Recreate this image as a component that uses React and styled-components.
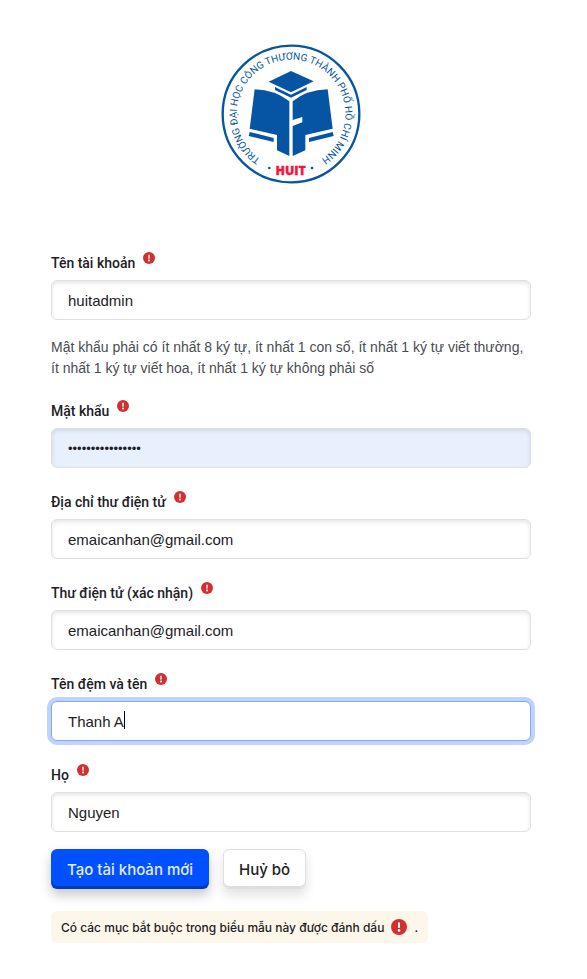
import React, { useEffect, useRef, useState } from "react";
import styled, { createGlobalStyle, css } from "styled-components";

const GlobalStyle = createGlobalStyle`
  * {
    box-sizing: border-box;
  }
  body {
    margin: 0;
    background: #fff;
    color: #1d2125;
    font-family: "Liberation Sans", Arial, sans-serif;
    font-size: 14px;
  }
`;

const Page = styled.main`
  padding: 44px 56px 36px 51px;
`;
const Logo = styled.svg`
  display: block;
  width: 140px;
  height: 140px;
  margin: 0 auto 68px;
`;
const Form = styled.form`
  display: flex;
  flex-direction: column;
`;
const Field = styled.div`
  display: flex;
  flex-direction: column;
  gap: 8px;
  margin-bottom: ${(props) => (props.$tight ? "17px" : "23px")};
`;
const Label = styled.label`
  display: flex;
  gap: 8px;
  height: 20px;
  line-height: 22px;
  font-family: Roboto, sans-serif;
  font-size: 14px;
  font-weight: 500;
`;
const InputBox = styled.div`
  position: relative;
`;
const Input = styled.input`
  display: block;
  width: 100%;
  height: 40px;
  padding: 0 16px;
  border: 1px solid #dee0e2;
  border-radius: 6px;
  outline: none;
  background: ${(props) => (props.$filled ? "#e8f0fe" : "#fff")};
  box-shadow: inset 0 2px 4px rgba(0, 0, 0, 0.1);
  color: #1d2125;
  caret-color: transparent;
  font-family: "Liberation Sans", Arial, sans-serif;
  font-size: ${(props) => (props.type === "password" ? "13px" : "15px")};
  &:focus {
    border-color: #80a8ff;
    box-shadow: 0 0 0 4px #bfd3ff;
  }
`;
// same font as the input, so that its width follows the typed text
const Caret = styled.span`
  position: absolute;
  top: 10px;
  left: 17px;
  border-right: 1px solid #000;
  height: 18px;
  font-size: 15px;
  line-height: 18px;
  white-space: pre;
  color: transparent;
  pointer-events: none;
`;
const Help = styled.p`
  margin: 0 0 21px;
  line-height: 21px;
  font-size: 14px;
  color: #494c50;
`;
const Actions = styled.div`
  display: flex;
  gap: 14px;
  margin-bottom: 22px;
`;
const Button = styled.button`
  height: 40px;
  padding: 0 15px;
  border: 1px solid #dee0e2;
  border-radius: 6px;
  background: #fff;
  box-shadow: inset 0 -2px 0 #dcdfe2, 0 6px 12px rgba(0, 0, 0, 0.12);
  color: #1d2125;
  font-family: Inter, sans-serif;
  font-size: 15px;
  font-weight: 500;
  cursor: pointer;
  ${(props) =>
    props.$primary &&
    css`
      border-color: transparent;
      background: #0050ff border-box;
      box-shadow: inset 0 -2px 0 #003ab9, 0 6px 12px rgba(0, 0, 0, 0.22);
      border-bottom-color: #003ab9;
      color: #e2ebff;
    `}
`;
const Notice = styled.div`
  display: flex;
  align-items: center;
  align-self: flex-start;
  gap: 7px;
  height: 32px;
  padding: 0 10px;
  border-radius: 6px;
  background: #fdf6ea;
  font-family: Inter, sans-serif;
  font-size: 12px;
  font-weight: 500;
`;
const Mark = styled.svg`
  flex: none;
  width: ${(props) => props.$size}px;
  height: ${(props) => props.$size}px;
`;

const fields = [
  { id: "email", label: "Địa chỉ thư điện tử", value: "emaicanhan@gmail.com" },
  {
    id: "email2",
    label: "Thư điện tử (xác nhận)",
    value: "emaicanhan@gmail.com",
  },
  { id: "firstname", label: "Tên đệm và tên", value: "Thanh A", focus: true },
  { id: "lastname", label: "Họ", value: "Nguyen", last: true },
];

function Required({ size = 12 }) {
  return (
    <Mark $size={size} viewBox="0 0 16 16" aria-hidden="true">
      <circle cx="8" cy="8" r="8" fill="#d12f32" />
      <path d="M6.9 3.6h2.2L8.8 9H7.2z" fill="#fff" />
      <circle cx="8" cy="11.4" r="1.3" fill="#fff" />
    </Mark>
  );
}

function HuitLogo() {
  return (
    <Logo viewBox="34 26 420 420" role="img" aria-label="HUIT">
      <defs>
        <path id="ring" d="M244 399A163 163 0 0 1 244 73A163 163 0 0 1 244 399" />
      </defs>
      <circle
        cx="244"
        cy="236"
        r="205"
        fill="#fff"
        stroke="#0655a4"
        strokeWidth="7"
      />
      <text
        fill="#0655a4"
        fontFamily="Roboto, sans-serif"
        fontSize="30"
        textAnchor="middle"
      >
        <textPath href="#ring" startOffset="50%">
          TRƯỜNG ĐẠI HỌC CÔNG THƯƠNG THÀNH PHỐ HỒ CHÍ MINH
        </textPath>
      </text>
      <g fill="#0655a4">
        <path d="M177 139L244 107L312 138L244 171Z" />
        <path d="M196 155L244 178L291 155V164L244 187L196 164Z" />
        <path d="M135 162Q196 164 239 198V362L202 345V299L120 280Z" />
        <path d="M354 162Q290 164 249 198V254L278 245V261L249 272V362L287 345V299L369 280Z" />
        <path d="M120 290L192 308V320L117 302Z" />
        <path d="M369 290L298 308V320L372 302Z" />
        <circle cx="179" cy="398" r="4" />
        <circle cx="307" cy="398" r="4" />
      </g>
      <text
        x="243"
        y="419"
        fill="#f0183f"
        stroke="#f0183f"
        strokeWidth="1"
        fontFamily="'Open Sans', sans-serif"
        fontSize="37"
        fontWeight="800"
        textAnchor="middle"
      >
        HUIT
      </text>
    </Logo>
  );
}

function FormField({ id, label, value, type = "text", filled, focus, last }) {
  const [text, setText] = useState(value);
  const [active, setActive] = useState(false);
  const ref = useRef(null);

  useEffect(() => {
    if (focus) {
      ref.current.focus();
    }
  }, [focus]);

  return (
    <Field $tight={last}>
      <Label htmlFor={id}>
        {label}
        <Required />
      </Label>
      <InputBox>
        <Input
          id={id}
          ref={ref}
          type={type}
          value={text}
          $filled={filled}
          onFocus={() => setActive(true)}
          onBlur={() => setActive(false)}
          onChange={(e) => setText(e.target.value)}
        />
        {active && type === "text" && <Caret aria-hidden="true">{text}</Caret>}
      </InputBox>
    </Field>
  );
}

function App() {
  return (
    <>
      <GlobalStyle />
      <Page>
        <HuitLogo />
        <Form onSubmit={(e) => e.preventDefault()}>
          <FormField id="username" label="Tên tài khoản" value="huitadmin" last />
          <Help>
            Mật khẩu phải có ít nhất 8 ký tự, ít nhất 1 con số, ít nhất 1 ký tự
            viết thường, ít nhất 1 ký tự viết hoa, ít nhất 1 ký tự không phải số
          </Help>
          <FormField
            id="password"
            label="Mật khẩu"
            type="password"
            value="matkhauhuit@2024"
            filled
          />
          {fields.map((item) => (
            <FormField key={item.id} {...item} />
          ))}
          <Actions>
            <Button type="submit" $primary>
              Tạo tài khoản mới
            </Button>
            <Button type="button">Huỷ bỏ</Button>
          </Actions>
          <Notice>
            Có các mục bắt buộc trong biểu mẫu này được đánh dấu
            <Required size={16} />.
          </Notice>
        </Form>
      </Page>
    </>
  );
}

export default App;
